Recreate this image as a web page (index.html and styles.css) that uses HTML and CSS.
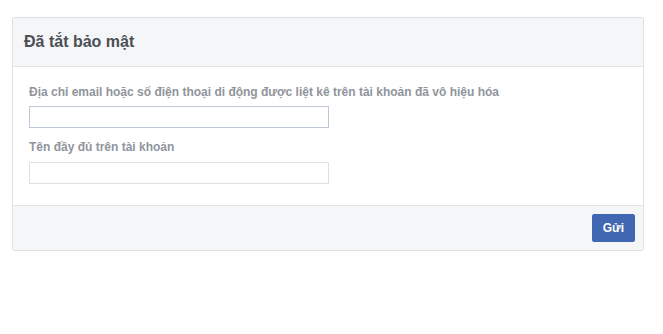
FILE: index.html
```html
<!DOCTYPE html>
<html lang="vi">
<head>
  <meta charset="UTF-8" />
  <meta name="viewport" content="width=device-width, initial-scale=1.0" />
  <title>Đã tắt bảo mật</title>
  <link rel="stylesheet" href="styles.css">
</head>
<body>
  <div class="card">
    <div class="card-header">
      <h2 class="title">Đã tắt bảo mật</h2>
    </div>
    <div class="card-body">
      <label for="email">Địa chỉ email hoặc số điện thoại di động được liệt kê trên tài khoản đã vô hiệu hóa</label>
      <input id="email" type="text" class="field focused" />
      <label for="fullname" class="second">Tên đầy đủ trên tài khoản</label>
      <input id="fullname" type="text" class="field" />
    </div>
    <div class="card-footer">
      <button type="submit">Gửi</button>
    </div>
  </div>
</body>
</html>
```

FILE: styles.css
```css
body {
  margin: 0;
  padding: 17px 19px 0 12px;
  font-family: "Liberation Sans", Arial, sans-serif;
  background: #fff;
  color: #1d2129;
}
.card {
  border: 1px solid #dddfe2;
  border-radius: 3px;
  overflow: hidden;
}
.card-header {
  background: #f5f6f7;
  border-bottom: 1px solid #e5e5e5;
  padding: 12px 11px;
}
.title {
  margin: 0;
  font-size: 16px;
  line-height: 24px;
  font-weight: bold;
  color: #4b4f56;
}
.card-body {
  padding: 16px 16px 21px;
}
label {
  display: block;
  font-size: 12px;
  line-height: 18px;
  font-weight: bold;
  color: #90949c;
  margin-bottom: 5px;
}
label.second {
  margin-top: 10px;
  margin-bottom: 6px;
}
.field {
  display: block;
  box-sizing: border-box;
  width: 300px;
  height: 22px;
  margin: 0;
  padding: 3px;
  border: 1px solid #dddfe2;
  font-family: inherit;
  font-size: 12px;
  outline: none;
}
.field.focused {
  border-color: #bdc7d8;
}
.card-footer {
  background: #f5f6f7;
  border-top: 1px solid #e5e5e5;
  padding: 8px;
  display: flex;
  justify-content: flex-end;
}
button {
  height: 28px;
  padding: 0 10px;
  background: #4267b2;
  border: 1px solid #4267b2;
  border-radius: 2px;
  color: #fff;
  font-family: inherit;
  font-size: 12px;
  font-weight: bold;
  cursor: pointer;
}
```
